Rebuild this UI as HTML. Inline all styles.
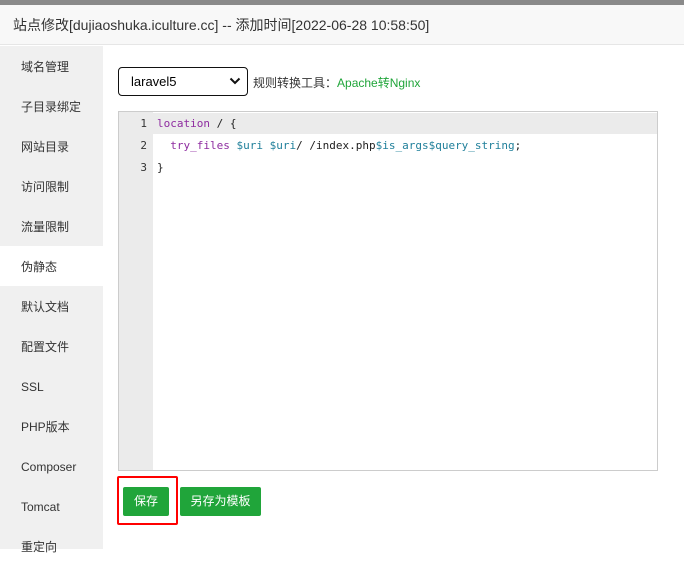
<!DOCTYPE html><html><head><meta charset="utf-8"><style>
body{margin:0;width:684px;height:549px;overflow:hidden;background:#fff;font-family:"Liberation Sans","Noto Sans CJK SC",sans-serif;position:relative}
.top{position:absolute;left:0;top:0;width:684px;height:5px;background:#8a8a8a}
.hd{position:absolute;left:0;top:5px;width:684px;height:40px;background:#f8f8f8;border-bottom:1px solid #e6e6e6;font-size:14px;color:#333;line-height:40px;padding-left:13px;box-sizing:border-box}
.side{position:absolute;left:0;top:46px;width:103px;height:503px;background:#f0f0f0}
.side div{height:40px;line-height:42px;font-size:12px;color:#333;padding-left:21px}
.side .on{background:#fff}
.sel{position:absolute;left:118px;top:67px;width:130px;height:29px;border:1.5px solid #111;border-radius:4px;font-size:13px;line-height:27px;padding-left:12px;box-sizing:border-box}
.sel svg{position:absolute;right:6px;top:9px}
.tool{position:absolute;left:253px;top:74px;font-size:12px;color:#333}
.tool b{font-weight:normal;color:#20a53a}
.ed{position:absolute;left:118px;top:111px;width:538px;height:358px;border:1px solid #ccc}
.gut{position:absolute;left:0;top:0;width:34px;height:100%;background:#ebebeb}
.act{position:absolute;left:0;top:1px;width:100%;height:21px;background:#ebebeb}
.ln{position:absolute;left:0;width:28px;text-align:right;font-family:"DejaVu Sans Mono",monospace;font-size:11px;color:#333}
.cd{position:absolute;left:38px;font-family:"DejaVu Sans Mono",monospace;font-size:11px;color:#222;white-space:pre}
.k{color:#8e2ca0}.v{color:#1f7f9a}
.btn{position:absolute;top:487px;height:29px;background:#20a53a;color:#fff;font-size:12px;line-height:29px;text-align:center;border-radius:2px}
.red{position:absolute;left:117px;top:476px;width:57px;height:45px;border:2px solid #f00;border-radius:2px}
</style></head><body>
<div class="top"></div>
<div class="hd">站点修改[dujiaoshuka.iculture.cc] -- 添加时间[2022-06-28 10:58:50]</div>
<div class="side"><div>域名管理</div><div>子目录绑定</div><div>网站目录</div><div>访问限制</div><div>流量限制</div><div class="on">伪静态</div><div>默认文档</div><div>配置文件</div><div>SSL</div><div>PHP版本</div><div>Composer</div><div>Tomcat</div><div>重定向</div></div>
<div class="sel">laravel5<svg width="12" height="8" viewBox="0 0 12 8"><path d="M1.5 1.5 6 6 10.5 1.5" fill="none" stroke="#111" stroke-width="2"/></svg></div>
<div class="tool">规则转换工具：<b>Apache转Nginx</b></div>
<div class="ed"><div class="act"></div><div class="gut"></div>
<div class="ln" style="top:5px">1</div><div class="ln" style="top:27px">2</div><div class="ln" style="top:49px">3</div>
<div class="cd" style="top:5px"><span class="k">location</span> / {</div>
<div class="cd" style="top:27px">  <span class="k">try_files</span> <span class="v">$uri</span> <span class="v">$uri</span>/ /index.php<span class="v">$is_args$query_string</span>;</div>
<div class="cd" style="top:49px">}</div>
</div>
<div class="btn" style="left:123px;width:46px">保存</div>
<div class="btn" style="left:180px;width:81px">另存为模板</div>
<div class="red"></div>
</body></html>
